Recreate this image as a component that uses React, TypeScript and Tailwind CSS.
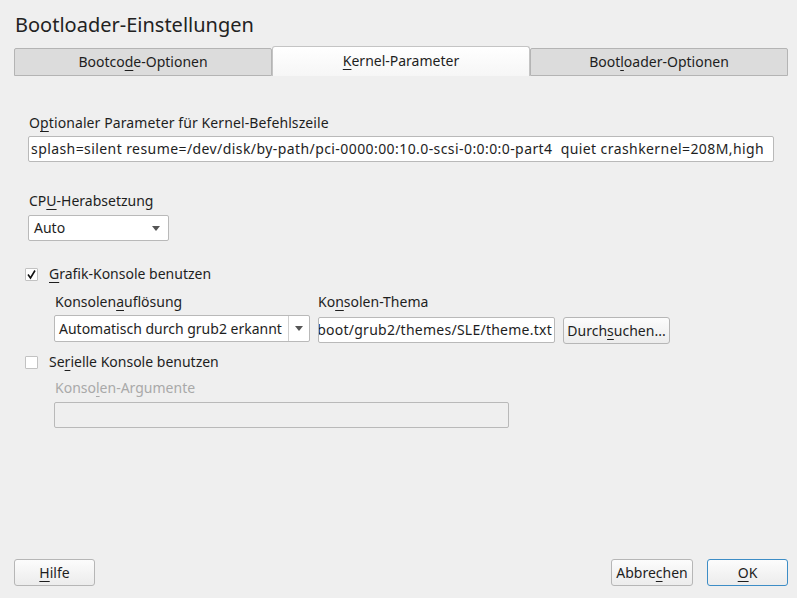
import React from "react";

function Mn({ children }: { children: React.ReactNode }) {
  return <span className="underline underline-offset-[3px] decoration-1">{children}</span>;
}

function Tab({ active, children }: { active?: boolean; children: React.ReactNode }) {
  if (active) {
    return (
      <div className="w-[258px] h-[30px] flex items-center justify-center border border-b-0 border-[#c4c4c4] rounded-t-[3px] bg-gradient-to-b from-[#ffffff] to-[#f6f6f6] -mt-[2px] pb-[2px]">
        {children}
      </div>
    );
  }
  return (
    <div className="w-[258px] h-[28px] flex items-center justify-center border border-[#b4b4b4] rounded-t-[2px] bg-[#dcdcdc]">
      {children}
    </div>
  );
}

function Arrow() {
  return (
    <svg width="8" height="5" viewBox="0 0 8 5">
      <path d="M0 0 L8 0 L4 5 Z" fill="#555" />
    </svg>
  );
}

function Check({ checked }: { checked?: boolean }) {
  return (
    <div className="w-[13px] h-[13px] border border-[#c2c2c2] bg-white rounded-[1px] flex items-center justify-center">
      {checked && (
        <svg width="11" height="11" viewBox="0 0 11 11">
          <path d="M2 5.5 L4.5 9 L9 1.5" fill="none" stroke="#111" strokeWidth="1.6" />
        </svg>
      )}
    </div>
  );
}

function Button({ primary, className, children }: { primary?: boolean; className?: string; children: React.ReactNode }) {
  return (
    <div
      className={
        "h-[27px] flex items-center justify-center rounded-[3px] border bg-gradient-to-b from-[#fcfcfc] to-[#ececec] " +
        (primary ? "border-[#3d8dc6] " : "border-[#b6b6b6] ") +
        (className ?? "")
      }
    >
      {children}
    </div>
  );
}

export default function App() {
  return (
    <div
      className="w-[797px] h-[598px] bg-[#efefef] text-[#1e1e1e] flex flex-col text-[14px] leading-[20px]"
      style={{ fontFamily: '"Noto Sans", "Open Sans", sans-serif' }}
    >
      <div className="pl-[15px] pt-[11px] text-[20px] leading-[27px] text-[#222]">Bootloader-Einstellungen</div>

      <div className="flex items-end pl-[14px] mt-[9px] h-[29px]">
        <Tab>
          <span>
            Bootco<Mn>d</Mn>e-Optionen
          </span>
        </Tab>
        <Tab active>
          <span>
            <Mn>K</Mn>ernel-Parameter
          </span>
        </Tab>
        <Tab>
          <span>
            Boot<Mn>l</Mn>oader-Optionen
          </span>
        </Tab>
      </div>

      <div className="flex-1 flex flex-col pl-[28px]">
        <div className="mt-[37px] pl-[1px] tracking-[0.1px]">
          O<Mn>p</Mn>tionaler Parameter für Kernel-Befehlszeile
        </div>
        <div className="mt-[3px] w-[746px] h-[26px] bg-white border border-[#b9b9b9] rounded-[2px] flex items-center pl-[2px] overflow-hidden whitespace-pre tracking-[0.42px]">
          splash=silent resume=/dev/disk/by-path/pci-0000:00:10.0-scsi-0:0:0:0-part4  quiet crashkernel=208M,high
        </div>

        <div className="mt-[29px] pl-[1px]">
          CP<Mn>U</Mn>-Herabsetzung
        </div>
        <div className="mt-[4px] w-[141px] h-[26px] bg-white border border-[#b9b9b9] rounded-[2px] flex items-center justify-between pl-[5px] pr-[8px]">
          <span>Auto</span>
          <Arrow />
        </div>

        <div className="mt-[23px] flex items-center -ml-[3px] h-[20px]">
          <Check checked />
          <span className="ml-[11px]">
            <Mn>G</Mn>rafik-Konsole benutzen
          </span>
        </div>

        <div className="mt-[8px] flex pl-[26px]">
          <div className="flex flex-col">
            <div className="pl-[1px]">
              Konsolen<Mn>a</Mn>uflösung
            </div>
            <div className="mt-[3px] w-[256px] h-[27px] bg-white border border-[#b9b9b9] rounded-[2px] flex items-center">
              <span className="flex-1 pl-[4px] whitespace-nowrap">Automatisch durch grub2 erkannt</span>
              <div className="w-[21px] h-full border-l border-[#cfcfcf] flex items-center justify-center">
                <Arrow />
              </div>
            </div>
          </div>
          <div className="flex flex-col ml-[8px]">
            <div>
              Ko<Mn>n</Mn>solen-Thema
            </div>
            <div className="flex items-center mt-[3px]">
              <div className="w-[237px] h-[26px] bg-white border border-[#b9b9b9] rounded-[2px] flex items-center justify-end pr-[2px] overflow-hidden whitespace-nowrap tracking-[0.25px]">
                /boot/grub2/themes/SLE/theme.txt
              </div>
              <Button className="ml-[8px] w-[107px] mt-[2px]">
                <span>
                  Durch<Mn>s</Mn>uchen...
                </span>
              </Button>
            </div>
          </div>
        </div>

        <div className="mt-[8px] flex items-center -ml-[3px] h-[20px]">
          <Check />
          <span className="ml-[11px]">
            Se<Mn>r</Mn>ielle Konsole benutzen
          </span>
        </div>

        <div className="mt-[6px] pl-[27px] text-[#a9a9a9]">
          Konso<Mn>l</Mn>en-Argumente
        </div>
        <div className="mt-[4px] ml-[26px] w-[455px] h-[26px] bg-[#efefef] border border-[#b9b9b9] rounded-[2px]" />
      </div>

      <div className="flex items-center px-[9px] pb-[12px] pl-[14px]">
        <Button className="w-[81px]">
          <span>
            <Mn>H</Mn>ilfe
          </span>
        </Button>
        <div className="flex-1" />
        <Button className="w-[82px]">
          <span>
            Abbre<Mn>c</Mn>hen
          </span>
        </Button>
        <Button primary className="w-[81px] ml-[14px]">
          <span>
            <Mn>O</Mn>K
          </span>
        </Button>
      </div>
    </div>
  );
}
